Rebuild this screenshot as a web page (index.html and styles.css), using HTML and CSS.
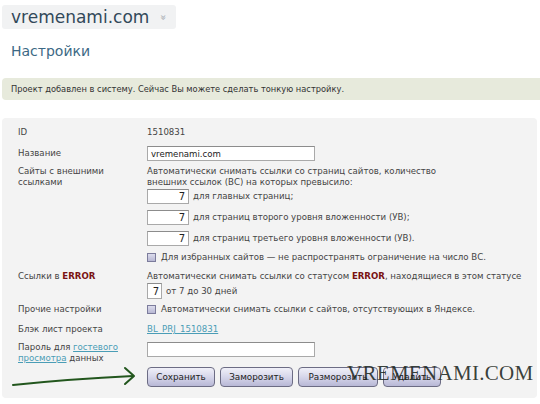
FILE: index.html
```html
<!DOCTYPE html>
<html lang="ru">
<head>
    <meta charset="UTF-8">
    <title>Настройки - vremenami.com</title>
    <link rel="stylesheet" href="styles.css">
</head>
<body>

<div class="site-title">
    <span>vremenami.com</span>
    <span class="chevron">&raquo;</span>
</div>

<h1 class="page-title">Настройки</h1>

<div class="notice">Проект добавлен в систему. Сейчас Вы можете сделать тонкую настройку.</div>

<div class="panel">
    <div class="row row-id">
        <div class="label">ID</div>
        <div class="value">1510831</div>
    </div>

    <div class="row row-name">
        <div class="label">Название</div>
        <div class="value"><input type="text" class="text-input" value="vremenami.com"></div>
    </div>

    <div class="row row-sites">
        <div class="label">Сайты с внешними<br>ссылками</div>
        <div class="value">
            <p class="desc">Автоматически снимать ссылки со страниц сайтов, количество<br>внешних ссылок (ВС) на которых превысило:</p>
            <div class="limit"><input type="text" class="num-input" value="7"> для главных страниц;</div>
            <div class="limit"><input type="text" class="num-input" value="7"> для страниц второго уровня вложенности (УВ);</div>
            <div class="limit"><input type="text" class="num-input" value="7"> для страниц третьего уровня вложенности (УВ).</div>
            <div class="check check-fav"><span class="box"></span>Для избранных сайтов &mdash; не распространять ограничение на число ВС.</div>
        </div>
    </div>

    <div class="row row-error">
        <div class="label">Ссылки в <b class="err">ERROR</b></div>
        <div class="value">
            <p class="desc">Автоматически снимать ссылки со статусом <b class="err">ERROR</b>, находящиеся в этом статусе</p>
            <div class="days"><input type="text" class="day-input" value="7"> от 7 до 30 дней</div>
        </div>
    </div>

    <div class="row row-other">
        <div class="label">Прочие настройки</div>
        <div class="value"><div class="check"><span class="box"></span>Автоматически снимать ссылки с сайтов, отсутствующих в Яндексе.</div></div>
    </div>

    <div class="row row-black">
        <div class="label">Блэк лист проекта</div>
        <div class="value"><a href="#">BL_PRJ_1510831</a></div>
    </div>

    <div class="row row-pass">
        <div class="label">Пароль для <a href="#">гостевого</a><br><a href="#">просмотра</a> данных</div>
        <div class="value"><input type="text" class="text-input"></div>
    </div>

    <div class="actions">
        <button class="btn btn-save">Сохранить</button>
        <button class="btn btn-freeze">Заморозить</button>
        <button class="btn btn-unfreeze">Разморозить</button>
        <button class="btn btn-delete">Удалить</button>
    </div>
</div>

<!-- hand-drawn pointer to the save button -->
<svg class="pointer" width="140" height="30" viewBox="0 0 140 30">
    <path d="M13 25 Q70 19 133 16" fill="none" stroke="#22561d" stroke-width="2" stroke-linecap="round"/>
    <path d="M125 8 L134 16 L125 24" fill="none" stroke="#22561d" stroke-width="2" stroke-linecap="round" stroke-linejoin="round"/>
</svg>

<div class="stamp">VREMENAMI.COM</div>

</body>
</html>
```

FILE: styles.css
```css
body {
    margin: 0;
    font-family: "DejaVu Sans", Verdana, sans-serif;
    font-size: 8.6px;
    color: #444;
    background: #fff;
    position: relative;
}

.site-title {
    display: flex;
    align-items: center;
    width: 174px;
    height: 24px;
    box-sizing: border-box;
    margin: 5px 0 0 2px;
    padding-left: 9px;
    background: #f1f2f3;
    border-radius: 3px;
    font-size: 17px;
    color: #32495a;
}
.site-title .chevron {
    display: inline-block;
    margin-left: 11px;
    font-size: 10px;
    color: #a0a8ae;
    transform: rotate(90deg);
}

.page-title {
    margin: 13px 0 0 11px;
    font-size: 14px;
    line-height: 18px;
    font-weight: normal;
    color: #3c6985;
}

.notice {
    margin: 18px 0 0 2px;
    height: 22px;
    line-height: 22px;
    padding-left: 9px;
    background: #e7eadc;
    border-radius: 4px 0 0 4px;
    font-size: 8.3px;
    color: #333;
}

.panel {
    margin: 18px 3px 0 2px;
    padding: 9px 0 11px 16px;
    background: #f3f3f3;
    border-radius: 4px;
}

.row {
    display: flex;
    line-height: 11px;
}
.label {
    width: 129px;
    flex: none;
}
.value {
    flex: 1;
}
.row-name {
    margin-top: 8px;
    align-items: center;
}
.row-sites { margin-top: 5px; }
.row-error { margin-top: 8px; }
.row-other { margin-top: 5px; }
.row-black { margin-top: 9px; }
.row-pass { margin-top: 7px; }

.desc {
    margin: 0;
}
.err {
    color: #7a1212;
}

a {
    color: #4a9db6;
}

input {
    font-family: "DejaVu Sans", Verdana, sans-serif;
    font-size: 8.6px;
    color: #222;
    box-sizing: border-box;
    background: #fff;
    border: 1px solid #a9a9a9;
    border-top-color: #8c8c8c;
    margin: 0;
}
.text-input {
    width: 168px;
    height: 15px;
    padding: 0 3px;
}

.limit {
    display: flex;
    align-items: center;
    margin-top: 6px;
}
.limit:first-of-type {
    margin-top: 1px;
}
.num-input {
    width: 42px;
    height: 15px;
    padding: 0 3px;
    margin-right: 4px;
    text-align: right;
    font-size: 10px;
}

.days {
    display: flex;
    align-items: center;
    margin-top: 1px;
}
.day-input {
    width: 15px;
    height: 16px;
    padding: 0 2px;
    margin-right: 4px;
    text-align: right;
    font-size: 10px;
}

.check {
    display: flex;
    align-items: center;
}
.check-fav {
    margin-top: 6px;
}
.check .box {
    width: 7px;
    height: 7px;
    margin-right: 5px;
    border: 1px solid #7c7c9c;
    background: linear-gradient(#dcdcec, #b8b8d4);
}

.actions {
    display: flex;
    gap: 5px;
    margin: 3px 0 0 129px;
}
.btn {
    height: 20px;
    padding: 0;
    font-family: "DejaVu Sans", Verdana, sans-serif;
    font-size: 8.8px;
    color: #222;
    background: linear-gradient(#f0f0f8, #d6d6ea 50%, #b8b8d6);
    border: 1px solid #6c6c84;
    border-radius: 4px;
}
.btn-save { width: 68px; }
.btn-freeze { width: 73px; }
.btn-unfreeze { width: 80px; }
.btn-delete { width: 58px; }

.pointer {
    position: absolute;
    left: 0;
    top: 360px;
}

.stamp {
    position: absolute;
    left: 347px;
    top: 363px;
    font-family: "Liberation Serif", "Times New Roman", serif;
    font-size: 21px;
    line-height: 1;
    letter-spacing: 0.3px;
    color: rgba(30, 40, 34, 0.88);
}
```
